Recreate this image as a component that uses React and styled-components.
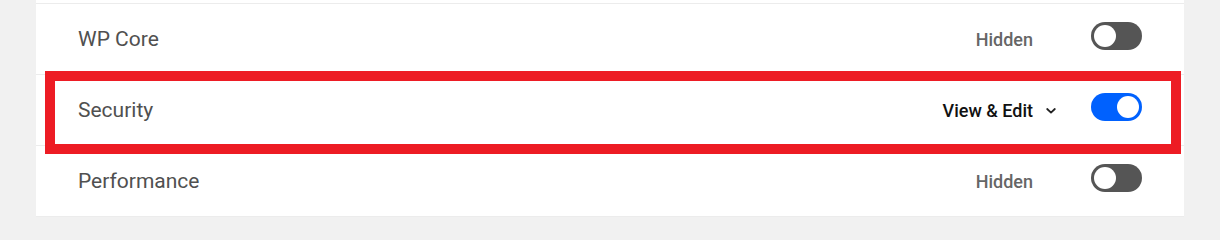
import styled, { createGlobalStyle } from "styled-components";

const GlobalStyle = createGlobalStyle`
  html, body {
    margin: 0;
    padding: 0;
    background: #f1f1f1;
    font-family: Roboto, "Liberation Sans", sans-serif;
  }
`;

const rows = [
  { name: "WP Core", access: "Hidden", on: false },
  { name: "Security", access: "View & Edit", on: true, dropdown: true, highlight: true },
  { name: "Performance", access: "Hidden", on: false },
];

const Chevron = () => (
  <svg width="10" height="6" viewBox="0 0 10 6" fill="none">
    <polyline
      points="1.2,1 5,4.6 8.8,1"
      stroke="#222"
      strokeWidth="1.8"
      strokeLinecap="round"
      strokeLinejoin="round"
    />
  </svg>
);

const App = () => (
  <>
    <GlobalStyle />
    <Panel>
      <Stub />
      {rows.map((row) => (
        <Row key={row.name}>
          <Name>{row.name}</Name>
          <Access>
            <AccessLabel $dropdown={row.dropdown}>{row.access}</AccessLabel>
            <ChevronSlot>{row.dropdown && <Chevron />}</ChevronSlot>
          </Access>
          <Toggle $on={row.on}>
            <Knob $on={row.on} />
          </Toggle>
          {row.highlight && <Highlight />}
        </Row>
      ))}
    </Panel>
  </>
);

const Panel = styled.div`
  margin: 0 36px;
  background: #fff;
`;

const Stub = styled.div`
  height: 3px;
  border-bottom: 1px solid #ececec;
`;

const Row = styled.div`
  position: relative;
  display: flex;
  align-items: center;
  height: 70px;
  padding: 0 42px;
  border-bottom: 1px solid #ececec;
`;

const Name = styled.div`
  flex: 1;
  font-size: 21px;
  color: #505050;
`;

const Access = styled.div`
  display: flex;
  align-items: center;
  gap: 13px;
  margin-right: 35px;
`;

const AccessLabel = styled.span`
  font-size: 18px;
  font-weight: 500;
  color: ${(p) => (p.$dropdown ? "#111" : "#666")};
`;

const ChevronSlot = styled.span`
  display: flex;
  width: 10px;
  padding-top: 2px;
`;

const Toggle = styled.div`
  position: relative;
  box-sizing: border-box;
  width: 51px;
  height: 28px;
  margin-bottom: 6px;
  border-radius: 14px;
  background: ${(p) => (p.$on ? "#0061fe" : "#555")};
`;

const Knob = styled.span`
  position: absolute;
  top: 3px;
  left: ${(p) => (p.$on ? "26px" : "3px")};
  width: 22px;
  height: 22px;
  border-radius: 50%;
  background: #fff;
`;

const Highlight = styled.div`
  position: absolute;
  top: -4px;
  bottom: -9px;
  left: 9px;
  right: 3px;
  border: 10px solid #ed1c24;
  pointer-events: none;
`;

export default App;
